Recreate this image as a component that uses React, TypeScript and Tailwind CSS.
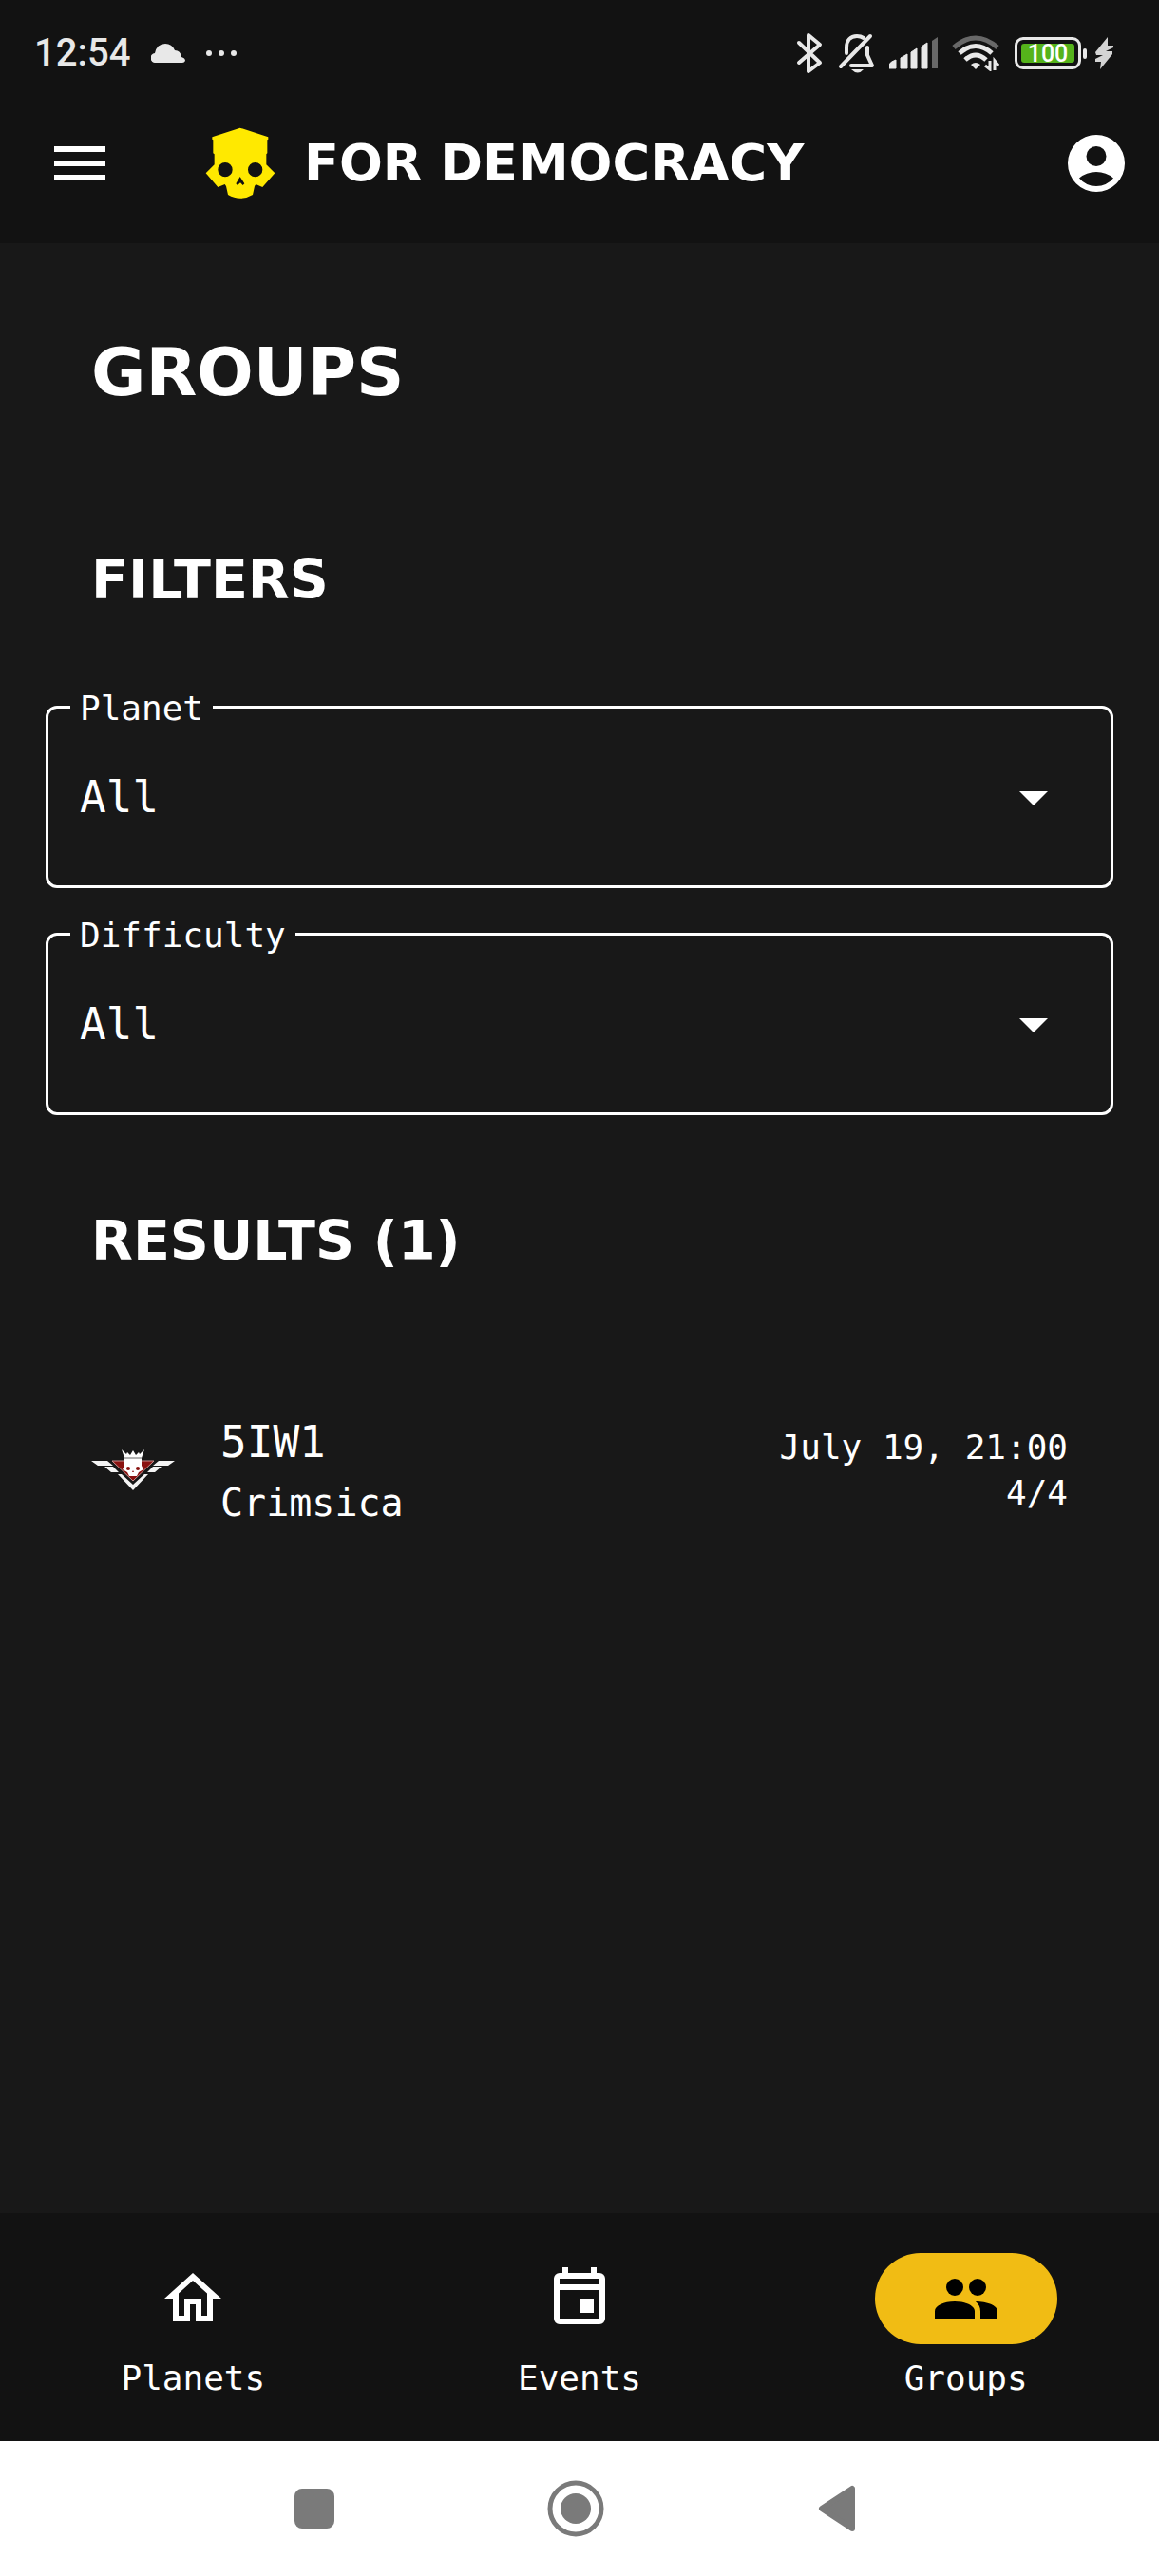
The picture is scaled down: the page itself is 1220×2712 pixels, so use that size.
import { type ReactNode } from 'react';

const mono = "font-['DejaVu_Sans_Mono',monospace]";
const display = "font-['DejaVu_Sans',sans-serif] font-bold";

function SkullLogo() {
  return (
    <svg viewBox="0 0 222 228" className="h-[76px] w-[74px] shrink-0" aria-hidden="true">
      <path
        fill="#ffe900"
        fillRule="evenodd"
        d="M110 2 199 31V38L196 40V82L193 85V118L220 145 181 189 160 180 156 186 150 213Q111 236 72 213L66 186 62 180 40 189 2 145 29 118V85L25 82V40L22 38V31ZM63 111a23 23 0 1 0 0 46a23 23 0 1 0 0-46ZM158 111a23 23 0 1 0 0 46a23 23 0 1 0 0-46ZM110 156 97 178 102 183 111 175 119 183 124 178Z"
      />
    </svg>
  );
}

function StatusIcons() {
  return (
    <div className="flex h-12 items-center text-[#e8e8e8]">
      <svg viewBox="0 0 28 44" className="mr-4 h-11 w-7" fill="none" stroke="currentColor" strokeWidth="4" strokeLinejoin="round" strokeLinecap="round" aria-label="Bluetooth">
        <path d="M3 11 25 32 13 41V3L25 13 3 32" />
      </svg>
      <svg viewBox="0 0 40 44" className="mr-[14px] h-11 w-10" fill="none" stroke="currentColor" strokeWidth="4" strokeLinejoin="round" strokeLinecap="round" aria-label="Muted">
        <path d="M9 22V16C9 9 13 4 20 4Q24 4 27 6" />
        <path d="M31 16V24L36 35H14" />
        <path d="M34 4 3 36" />
        <path d="M14 39h13q-6 7-13 0Z" fill="currentColor" stroke="none" />
      </svg>
      <svg viewBox="0 0 52 34" className="mr-[14px] h-[34px] w-[52px]" fill="currentColor" aria-label="Signal">
        <path d="M0 33V29Q1 26 7 24V33ZM12 33V22L19 18V33ZM23 33V16L29 12V33ZM34 33V10L40 6V33Z" stroke="currentColor" strokeWidth="1" strokeLinejoin="round" />
        <path d="M45 33V4L51 0V33Z" fill="#686868" />
      </svg>
      <svg viewBox="0 0 50 38" className="mr-4 h-[38px] w-[50px]" fill="none" stroke="currentColor" strokeWidth="5" aria-label="Wi-Fi">
        <path d="M2 13Q25-7 48 13" stroke="#686868" />
        <path d="M8 19Q25 4 42 19M14 26Q25 16 36 26" />
        <path d="M20 31Q25 27 30 31L25 36Z" fill="currentColor" stroke="none" />
        <path d="M40 27V36L35 32M45 37V27L49 32" strokeWidth="3" />
      </svg>
      <div className="flex h-[34px] w-[70px] items-center justify-center rounded-[9px] border-3 border-current p-1">
        <span className="flex h-5 w-full items-center justify-center rounded-[3px] bg-[#55b31b] font-[Roboto,sans-serif] text-[25px] leading-none font-medium text-white">
          100
        </span>
      </div>
      <span className="mr-2 ml-[2px] h-[11px] w-1 rounded-xs bg-current" />
      <svg viewBox="0 0 20 34" className="h-[34px] w-5" fill="#d4d4d4" aria-label="Charging">
        <path d="M14 0 1 16 2 19H9L1 23V26H7L6 34 19 18V15H12L20 11V9H14Z" />
      </svg>
    </div>
  );
}

function FilterSelect({ id, label }: { id: string; label: string }) {
  return (
    <fieldset className="rounded-xl border-3 border-white pl-[23px]">
      <legend className="px-[10px] pt-1 text-[36px] leading-9">
        <label htmlFor={id}>{label}</label>
      </legend>
      <div className="-mt-[18px] grid h-[186px] items-center pl-[10px]">
        <select
          id={id}
          className="col-start-1 row-start-1 h-full w-full appearance-none bg-transparent text-[46px] outline-none"
        >
          <option>All</option>
        </select>
        <svg
          viewBox="0 0 24 24"
          className="pointer-events-none col-start-1 row-start-1 mr-[45px] h-[72px] w-[72px] justify-self-end"
          fill="currentColor"
          aria-hidden="true"
        >
          <path d="m7 10 5 5 5-5z" />
        </svg>
      </div>
    </fieldset>
  );
}

function FactionEmblem() {
  return (
    <svg viewBox="0 0 88 44" className="h-11 w-[88px] shrink-0" aria-label="Faction emblem">
      <path d="M22 12H66L44 33Z" fill="#8a1210" stroke="#c98f8f" strokeWidth="1" />
      <path d="M0 12H17L23 17H7ZM88 12H71L65 17H81ZM14 18H23L29 24H21ZM74 18H65L59 24H67Z" fill="#f4f4f4" />
      <path d="M28 26H32L44 37 56 26H60L44 43Z" fill="#f4f4f4" />
      <path
        d="M32 0 37 5 38 3 41 6 44 1 47 6 50 3 51 5 56 0 53 9V17L55 21 50 24 48 28H40L38 24 33 21 35 17V9Z"
        fill="#fff"
      />
      <circle cx="39" cy="20" r="2" fill="#8a1210" />
      <circle cx="49" cy="20" r="2" fill="#8a1210" />
      <path d="M44 22 43 24H45Z" fill="#8a1210" />
      <path d="M35 9H53" stroke="#666" strokeWidth="1" />
    </svg>
  );
}

function NavItem({ label, active, children }: { label: string; active?: boolean; children: ReactNode }) {
  return (
    <a href="#" aria-current={active ? 'page' : undefined} className="flex flex-1 flex-col items-center gap-3">
      <span
        className={
          active
            ? 'flex h-24 w-48 items-center justify-center rounded-full bg-[#f1bc14] text-black'
            : 'flex h-24 w-48 items-center justify-center'
        }
      >
        <svg viewBox="0 0 24 24" className="h-[72px] w-[72px]" fill="currentColor" aria-hidden="true">
          {children}
        </svg>
      </span>
      <span className="text-[36px] leading-12">{label}</span>
    </a>
  );
}

export default function App() {
  return (
    <div className={`flex min-h-screen flex-col bg-[#181818] text-white ${mono}`}>
      <header className="bg-[#121212] pb-11">
        <div className="flex items-center justify-between pt-8 pr-12 pl-9">
          <div className="flex h-12 items-center">
            <span className="font-[Roboto,sans-serif] text-[40px] leading-12 font-medium text-[#e8e8e8]">12:54</span>
            <svg viewBox="0 0 36 20" className="ml-[22px] h-5 w-9" fill="#e8e8e8" aria-hidden="true">
              <path d="M5 20a5 5 0 0 1-1-10Q6 0 15 0Q22 0 25 7Q31 7 32 14Q36 15 36 18Q35 20 33 20Z" />
            </svg>
            <svg viewBox="0 0 32 6" className="ml-[22px] h-[6px] w-8" fill="#e8e8e8" aria-hidden="true">
              <circle cx="3" cy="3" r="3" />
              <circle cx="16" cy="3" r="3" />
              <circle cx="29" cy="3" r="3" />
            </svg>
          </div>
          <StatusIcons />
        </div>
        <div className="mt-13 flex h-20 items-center pr-[30px] pl-12">
          <button type="button" aria-label="Open menu">
            <svg viewBox="0 0 24 24" className="h-[72px] w-[72px]" fill="currentColor">
              <path d="M3 18h18v-2H3zm0-5h18v-2H3zm0-7v2h18V6z" />
            </svg>
          </button>
          <div className="ml-24 flex flex-1 items-center gap-[30px]">
            <SkullLogo />
            <span className={`text-[54px] leading-16 whitespace-nowrap ${display}`}>FOR DEMOCRACY</span>
          </div>
          <button type="button" aria-label="Account">
            <svg viewBox="0 0 24 24" className="h-[72px] w-[72px]" fill="currentColor">
              <path
                fillRule="evenodd"
                d="M12 2a10 10 0 1 0 0 20a10 10 0 1 0 0-20ZM12 6a3.500 3.500 0 1 1 0 7a3.500 3.500 0 1 1 0-7ZM6 17.200Q8.500 15 12 15T18 17.200Q15.700 20 12 20T6 17.200Z"
              />
            </svg>
          </button>
        </div>
      </header>

      <main className="flex-1 px-12">
        <h1 className={`px-12 pt-24 text-[70px] leading-20 ${display}`}>GROUPS</h1>
        <h2 className={`px-12 pt-[146px] text-[57px] leading-16 ${display}`}>FILTERS</h2>
        <form className="mt-[82px] flex flex-col gap-[28px]">
          <FilterSelect id="planet" label="Planet" />
          <FilterSelect id="difficulty" label="Difficulty" />
        </form>
        <h2 className={`px-12 pt-[100px] text-[57px] leading-16 ${display}`}>RESULTS (1)</h2>
        <ul className="mt-[144px]">
          <li className="flex items-center pr-12 pl-12">
            <FactionEmblem />
            <div className="ml-12 flex-1 pt-1">
              <div className="text-[46px] leading-16">5IW1</div>
              <div className="text-[40px] leading-16">Crimsica</div>
            </div>
            <div className="text-right text-[36px] leading-12">
              <div>July 19, 21:00</div>
              <div>4/4</div>
            </div>
          </li>
        </ul>
      </main>

      <nav aria-label="Main" className="flex bg-[#121212] pt-[42px] pb-[42px]">
        <NavItem label="Planets">
          <path d="M12 5.690l5 4.500V18h-2v-6H9v6H7v-7.810l5-4.500M12 3L2 12h3v8h6v-6h2v6h6v-8h3L12 3z" />
        </NavItem>
        <NavItem label="Events">
          <path
            fillRule="evenodd"
            d="M6 1H8V3H16V1H18V3H19A2 2 0 0 1 21 5V19A2 2 0 0 1 19 21H5A2 2 0 0 1 3 19V5A2 2 0 0 1 5 3H6ZM5 5V7H19V5ZM5 9V19H19V9ZM12 12V17H17V12Z"
          />
          <path d="M12 12H17V17H12Z" />
        </NavItem>
        <NavItem label="Groups" active>
          <circle cx="8" cy="8" r="3" />
          <circle cx="16" cy="8" r="3" />
          <path d="M8 13C4.100 13 1 14.500 1 16.400V19H15V16.400C15 14.500 11.900 13 8 13ZM15.300 13C16.400 13.900 17 15 17 16.400V19H23V16.400C23 14.400 19.300 13 15.300 13Z" />
        </NavItem>
      </nav>

      <div className="flex justify-center bg-white pt-[35px] pr-2 pb-[35px] text-[#7a7a7a]">
        <button type="button" aria-label="Recent apps" className="flex h-[72px] max-w-[275px] flex-1 items-center justify-center">
          <span className="h-[42px] w-[42px] rounded-lg bg-current" />
        </button>
        <button type="button" aria-label="Home" className="flex h-[72px] max-w-[275px] flex-1 items-center justify-center">
          <svg viewBox="0 0 60 60" className="h-[60px] w-[60px]">
            <circle cx="30" cy="30" r="27" fill="none" stroke="currentColor" strokeWidth="5" />
            <circle cx="30" cy="30" r="16" fill="currentColor" />
          </svg>
        </button>
        <button type="button" aria-label="Back" className="flex h-[72px] max-w-[275px] flex-1 items-center justify-center">
          <svg viewBox="0 0 40 50" className="h-[50px] w-10" fill="currentColor" stroke="currentColor" strokeWidth="6" strokeLinejoin="round">
            <path d="M36 4V46L4 25Z" />
          </svg>
        </button>
      </div>
    </div>
  );
}
